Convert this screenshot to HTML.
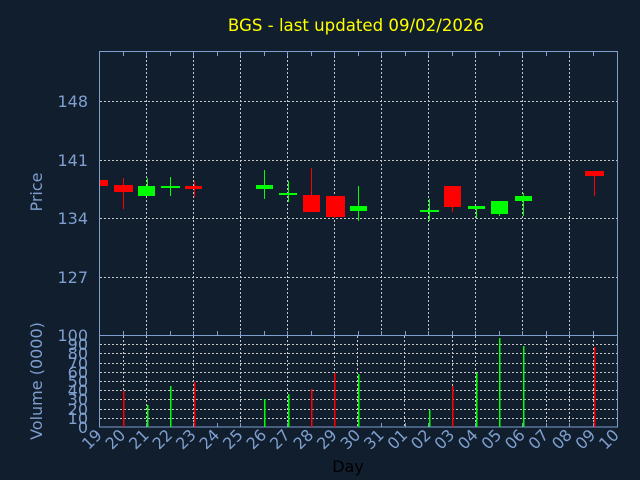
<!DOCTYPE html>
<html><head><meta charset="utf-8"><style>
html,body{margin:0;padding:0;background:#111e2e;}
svg{display:block;font-family:"DejaVu Sans","Liberation Sans",sans-serif;}
</style></head><body>
<svg width="640" height="480" viewBox="0 0 640 480" xmlns="http://www.w3.org/2000/svg">
<rect width="640" height="480" fill="#111e2e"/>
<text x="356" y="31" fill="#ffff00" font-size="16.6" text-anchor="middle">BGS - last updated 09/02/2026</text>
<g stroke="#c8c8c8" stroke-width="1" stroke-dasharray="2,2" fill="none">
<path d="M100 101.5H617M100 160.5H617M100 218.5H617M100 277.5H617"/>
<path d="M146.5 52V335M193.5 52V335M240.5 52V335M287.5 52V335M334.5 52V335M381.5 52V335M428.5 52V335M475.5 52V335M522.5 52V335M569.5 52V335"/>
<path d="M100 344.5H617M100 353.5H617M100 363.5H617M100 372.5H617M100 381.5H617M100 390.5H617M100 399.5H617M100 409.5H617M100 418.5H617"/>
<path d="M123.5 336V427M146.5 336V427M193.5 336V427M240.5 336V427M287.5 336V427M334.5 336V427M357.5 336V427M404.5 336V427M452.5 336V427M475.5 336V427M546.5 336V427M569.5 336V427M593.5 336V427"/>
</g>
<g stroke="#7f9fcf" stroke-width="1" fill="none">
<rect x="99.5" y="51.5" width="518" height="375.5"/>
<path d="M99.5 335.5H617.5"/>
</g>
<g stroke="#7f9fcf" stroke-width="1">
<path d="M123.5 52v4M146.5 52v4M170.5 52v4M193.5 52v4M217.5 52v4M240.5 52v4M264.5 52v4M287.5 52v4M311.5 52v4M334.5 52v4M358.5 52v4M381.5 52v4M405.5 52v4M428.5 52v4M452.5 52v4M475.5 52v4M499.5 52v4M522.5 52v4M546.5 52v4M569.5 52v4M593.5 52v4"/>
<path d="M123.5 427v-4M146.5 427v-4M170.5 427v-4M193.5 427v-4M217.5 427v-4M240.5 427v-4M264.5 427v-4M287.5 427v-4M311.5 427v-4M334.5 427v-4M358.5 427v-4M381.5 427v-4M405.5 427v-4M428.5 427v-4M452.5 427v-4M475.5 427v-4M499.5 427v-4M522.5 427v-4M546.5 427v-4M569.5 427v-4M593.5 427v-4"/>
<path d="M123.5 335v-4M146.5 335v-4M170.5 335v-4M193.5 335v-4M217.5 335v-4M240.5 335v-4M264.5 335v-4M287.5 335v-4M311.5 335v-4M334.5 335v-4M358.5 335v-4M381.5 335v-4M405.5 335v-4M428.5 335v-4M452.5 335v-4M475.5 335v-4M499.5 335v-4M522.5 335v-4M546.5 335v-4M569.5 335v-4M593.5 335v-4"/>
</g>
<g fill="#7f9fcf" font-size="16" text-anchor="end">
<text x="88" y="107">148</text><text x="88" y="166">141</text><text x="88" y="224">134</text><text x="88" y="283">127</text>
<text x="88" y="341">100</text>
</g>
<g fill="#7f9fcf" font-size="16" text-anchor="end">
<text x="88" y="350">90</text><text x="88" y="359">80</text><text x="88" y="369">70</text><text x="88" y="378">60</text><text x="88" y="387">50</text><text x="88" y="396">40</text><text x="88" y="405">30</text><text x="88" y="415">20</text><text x="88" y="424">10</text><text x="88" y="433">0</text>
</g>
<text transform="translate(42,192) rotate(-90)" fill="#7f9fcf" font-size="16" text-anchor="middle">Price</text>
<text transform="translate(42,381) rotate(-90)" fill="#7f9fcf" font-size="16" text-anchor="middle">Volume (0000)</text>
<g fill="#7f9fcf" font-size="16" text-anchor="end">
<text transform="translate(103,436) rotate(-45)">19</text>
<text transform="translate(126.5,436) rotate(-45)">20</text>
<text transform="translate(150,436) rotate(-45)">21</text>
<text transform="translate(173.5,436) rotate(-45)">22</text>
<text transform="translate(197,436) rotate(-45)">23</text>
<text transform="translate(220.5,436) rotate(-45)">24</text>
<text transform="translate(244,436) rotate(-45)">25</text>
<text transform="translate(267.5,436) rotate(-45)">26</text>
<text transform="translate(291,436) rotate(-45)">27</text>
<text transform="translate(314.5,436) rotate(-45)">28</text>
<text transform="translate(338,436) rotate(-45)">29</text>
<text transform="translate(361.5,436) rotate(-45)">30</text>
<text transform="translate(385,436) rotate(-45)">31</text>
<text transform="translate(408.5,436) rotate(-45)">01</text>
<text transform="translate(432,436) rotate(-45)">02</text>
<text transform="translate(455.5,436) rotate(-45)">03</text>
<text transform="translate(479,436) rotate(-45)">04</text>
<text transform="translate(502.5,436) rotate(-45)">05</text>
<text transform="translate(526,436) rotate(-45)">06</text>
<text transform="translate(549.5,436) rotate(-45)">07</text>
<text transform="translate(573,436) rotate(-45)">08</text>
<text transform="translate(596.5,436) rotate(-45)">09</text>
<text transform="translate(620,436) rotate(-45)">10</text>
</g>
<text x="348" y="472" fill="#000" font-size="16" text-anchor="middle">Day</text>
<g>
<rect x="100" y="180" width="8" height="6" fill="#ff0000"/>
<path d="M123.5 178V209" stroke="#ff0000"/><rect x="114" y="185" width="19" height="7" fill="#ff0000"/>
<path d="M147.5 178V196" stroke="#00ff00"/><rect x="138" y="186" width="17" height="10" fill="#00ff00"/>
<path d="M170.5 177V196" stroke="#00ff00"/><rect x="161" y="186" width="19" height="2" fill="#00ff00"/>
<path d="M194.5 181V197" stroke="#ff0000"/><rect x="185" y="186" width="17" height="3" fill="#ff0000"/>
<path d="M264.5 170V199" stroke="#00ff00"/><rect x="256" y="185" width="17" height="4" fill="#00ff00"/>
<path d="M288.5 181V202" stroke="#00ff00"/><rect x="279" y="193" width="18" height="2" fill="#00ff00"/>
<path d="M311.5 168V212" stroke="#ff0000"/><rect x="303" y="195" width="17" height="17" fill="#ff0000"/>
<path d="M334.5 196V218" stroke="#ff0000"/><rect x="326" y="196" width="19" height="21" fill="#ff0000"/>
<path d="M358.5 186V221" stroke="#00ff00"/><rect x="350" y="206" width="17" height="5" fill="#00ff00"/>
<path d="M429.5 199V221" stroke="#00ff00"/><rect x="420" y="210" width="19" height="2" fill="#00ff00"/>
<path d="M452.5 186V212" stroke="#ff0000"/><rect x="444" y="186" width="17" height="21" fill="#ff0000"/>
<path d="M476.5 206V218" stroke="#00ff00"/><rect x="468" y="206" width="17" height="3" fill="#00ff00"/>
<path d="M499.5 201V216" stroke="#00ff00"/><rect x="491" y="201" width="17" height="13" fill="#00ff00"/>
<path d="M523.5 193V216" stroke="#00ff00"/><rect x="515" y="196" width="17" height="5" fill="#00ff00"/>
<path d="M594.5 171V196" stroke="#ff0000"/><rect x="585" y="171" width="19" height="5" fill="#ff0000"/>
</g>
<g shape-rendering="crispEdges">
<rect x="123" y="391" width="1.5" height="36" fill="#ff0000"/>
<rect x="147" y="405" width="1.5" height="22" fill="#00ff00"/>
<rect x="170" y="386" width="1.5" height="41" fill="#00ff00"/>
<rect x="194" y="382" width="1.5" height="45" fill="#ff0000"/>
<rect x="264" y="399" width="1.5" height="28" fill="#00ff00"/>
<rect x="288" y="394" width="1.5" height="33" fill="#00ff00"/>
<rect x="311" y="389" width="1.5" height="38" fill="#ff0000"/>
<rect x="334" y="373" width="1.5" height="54" fill="#ff0000"/>
<rect x="358" y="374" width="1.5" height="53" fill="#00ff00"/>
<rect x="429" y="410" width="1.5" height="17" fill="#00ff00"/>
<rect x="452" y="386" width="1.5" height="41" fill="#ff0000"/>
<rect x="476" y="373" width="1.5" height="54" fill="#00ff00"/>
<rect x="499" y="338" width="1.5" height="89" fill="#00ff00"/>
<rect x="523" y="346" width="1.5" height="81" fill="#00ff00"/>
<rect x="594" y="347" width="1.5" height="80" fill="#ff0000"/>
</g>
</svg>
</body></html>
